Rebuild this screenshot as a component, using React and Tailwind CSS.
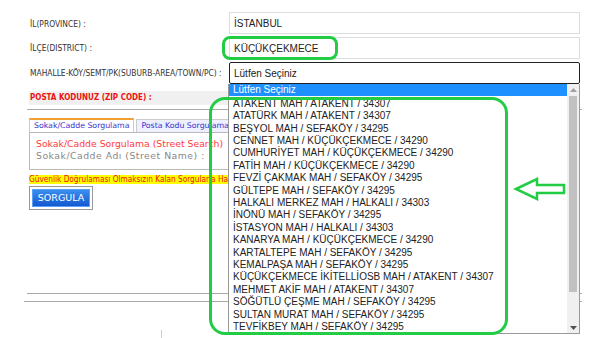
import React from "react";

const items = [
  "ATAKENT MAH / ATAKENT / 34307",
  "ATATÜRK MAH / ATAKENT / 34307",
  "BEŞYOL MAH / SEFAKÖY / 34295",
  "CENNET MAH / KÜÇÜKÇEKMECE / 34290",
  "CUMHURİYET MAH / KÜÇÜKÇEKMECE / 34290",
  "FATİH MAH / KÜÇÜKÇEKMECE / 34290",
  "FEVZİ ÇAKMAK MAH / SEFAKÖY / 34295",
  "GÜLTEPE MAH / SEFAKÖY / 34295",
  "HALKALI MERKEZ MAH / HALKALI / 34303",
  "İNÖNÜ MAH / SEFAKÖY / 34295",
  "İSTASYON MAH / HALKALI / 34303",
  "KANARYA MAH / KÜÇÜKÇEKMECE / 34290",
  "KARTALTEPE MAH / SEFAKÖY / 34295",
  "KEMALPAŞA MAH / SEFAKÖY / 34295",
  "KÜÇÜKÇEKMECE İKİTELLİOSB MAH / ATAKENT / 34307",
  "MEHMET AKİF MAH / ATAKENT / 34307",
  "SÖĞÜTLÜ ÇEŞME MAH / SEFAKÖY / 34295",
  "SULTAN MURAT MAH / SEFAKÖY / 34295",
  "TEVFİKBEY MAH / SEFAKÖY / 34295",
];

export default function App() {
  return (
    <div className="relative w-[605px] h-[338px] overflow-hidden bg-white font-['Liberation_Sans',Arial,sans-serif] text-[#222]">
      {/* form rows */}
      <div className="flex flex-col gap-[3px] pt-[12px]">
        <div className="flex items-center">
          <div className="w-[229px] pl-[30px] pt-[2px] text-[8.4px] text-[#333] font-['DejaVu_Sans_Condensed','DejaVu_Sans',sans-serif]">İL(PROVINCE) :</div>
          <div className="w-[351px] h-[22px] border border-[#ddd] flex items-center pl-[4px] text-[10px]">İSTANBUL</div>
        </div>
        <div className="flex items-center">
          <div className="w-[229px] pl-[30px] pt-[1px] text-[8.4px] text-[#333] font-['DejaVu_Sans_Condensed','DejaVu_Sans',sans-serif]">İLÇE(DISTRICT) :</div>
          <div className="w-[351px] h-[22px] border border-[#ddd] flex items-center pl-[4px] text-[10px]">KÜÇÜKÇEKMECE</div>
        </div>
        <div className="flex items-center">
          <div className="w-[229px] pl-[30px] text-[8.4px] text-[#333] font-['DejaVu_Sans_Condensed','DejaVu_Sans',sans-serif] whitespace-nowrap">MAHALLE-KÖY/SEMT/PK(SUBURB-AREA/TOWN/PC) :</div>
          <div className="w-[351px] h-[22px] border border-[#222] rounded-[2px] flex items-center pl-[4px] text-[10px]">Lütfen Seçiniz</div>
        </div>
      </div>

      <div className="ml-[29px] mt-[7px] w-[551px] h-[14px] bg-[#f0f0f0] flex items-center pl-[1px] text-[8px] font-bold text-[#ee1111] font-['DejaVu_Sans_Condensed','DejaVu_Sans',sans-serif]">
        POSTA KODUNUZ (ZIP CODE) :
      </div>
      <div className="ml-[27px] mt-[4px] w-[555px] border-t border-[#aaa]"></div>

      {/* tabs */}
      <div className="ml-[29px] mt-[8px] w-[201px]">
        <div className="flex gap-[2px] items-end">
          <div className="h-[14px] px-[4px] border border-b-0 border-[#ccc] border-t-2 border-t-[#f0a030] bg-white text-[7.8px] text-[#3333cc] flex items-center whitespace-nowrap font-['DejaVu_Sans',sans-serif]">
            Sokak/Cadde Sorgulama
          </div>
          <div className="h-[13px] px-[4px] border border-b-0 border-[#ccc] bg-[#eef0ff] text-[7.8px] text-[#3333cc] flex items-center whitespace-nowrap overflow-hidden font-['DejaVu_Sans',sans-serif]">
            Posta Kodu Sorgulama
          </div>
        </div>
        <div className="h-[38px] border border-[#bbb] pl-[6px] pt-[5px] font-['DejaVu_Sans',sans-serif] whitespace-nowrap overflow-hidden">
          <div className="text-[9.3px] leading-[12px] text-[#ff3b3b]">Sokak/Cadde Sorgulama (Street Search)</div>
          <div className="text-[9.3px] leading-[12px] tracking-[0.5px] text-[#888]">Sokak/Cadde Adı (Street Name) :</div>
        </div>
      </div>

      <div className="ml-[29px] mt-[5px] w-[200px] h-[9px] bg-[#ffff00] text-[8.2px] leading-[9px] text-[#ee1111] whitespace-nowrap overflow-hidden font-['DejaVu_Sans_Condensed','DejaVu_Sans',sans-serif]">
        Güvenlik Doğrulaması Olmaksızın Kalan Sorgularla Ha
      </div>
      <div className="ml-[29px] mt-[2px] w-[64px] h-[24px] border border-[#999] p-[2px]">
        <div className="w-full h-full bg-gradient-to-b from-[#3a8ef0] to-[#1459d0] border border-[#5aa0f5] text-white text-[9.5px] flex items-center justify-center font-['DejaVu_Sans',sans-serif]">
          SORGULA
        </div>
      </div>

      <div className="ml-[27px] mt-[83px] w-[555px] border-t border-[#aaa]"></div>
      <div className="ml-[24px] mt-[7px] w-[558px] border-t border-[#aaa]"></div>
      <div className="ml-[161px] mt-[28px] w-px h-[20px] bg-[#ccc]"></div>

      {/* open dropdown list */}
      <div className="absolute left-[228px] top-[84px] w-[352px] h-[250px] border border-t-0 border-[#999] bg-white flex">
        <div className="flex-1 text-[10px] whitespace-nowrap">
          <div className="h-[12px] leading-[12px] pl-[4px] bg-[#1e90ff] text-white">Lütfen Seçiniz</div>
          <div className="h-[1px]"></div>
          {items.map((it, i) => (
            <div
              key={it}
              className={
                i % 5 === 0 || i % 5 === 2
                  ? "h-[13px] leading-[13px] pl-[4px] text-[#222]"
                  : "h-[12px] leading-[12px] pl-[4px] text-[#222]"
              }
            >
              {it}
            </div>
          ))}
        </div>
        <div className="w-[12px] bg-[#f0f0f0] flex flex-col items-center">
          <div className="h-[12px] flex items-center justify-center">
            <svg width="7" height="4" viewBox="0 0 7 4"><path d="M0 4 L3.5 0 L7 4 Z" fill="#a0a0a0" /></svg>
          </div>
          <div className="w-[8px] h-[196px] bg-[#c1c1c1]"></div>
          <div className="flex-1"></div>
          <div className="h-[11px] flex items-center justify-center">
            <svg width="7" height="4" viewBox="0 0 7 4"><path d="M0 0 L3.5 4 L7 0 Z" fill="#505050" /></svg>
          </div>
        </div>
      </div>

      {/* annotations */}
      <div className="absolute left-[222px] top-[36px] w-[116px] h-[24px] border-[3px] border-[#22cc44] rounded-[8px]"></div>
      <div className="absolute left-[209px] top-[97px] w-[299px] h-[238px] border-[3px] border-[#22cc44] rounded-[16px]"></div>
      <svg className="absolute left-[512px] top-[176px]" width="56" height="26" viewBox="0 0 56 26">
        <path d="M4 13 L25 3 L25 9 L52 9 L52 17 L25 17 L25 23 Z" fill="none" stroke="#22cc44" strokeWidth="2.5" strokeLinejoin="miter" />
      </svg>
    </div>
  );
}
